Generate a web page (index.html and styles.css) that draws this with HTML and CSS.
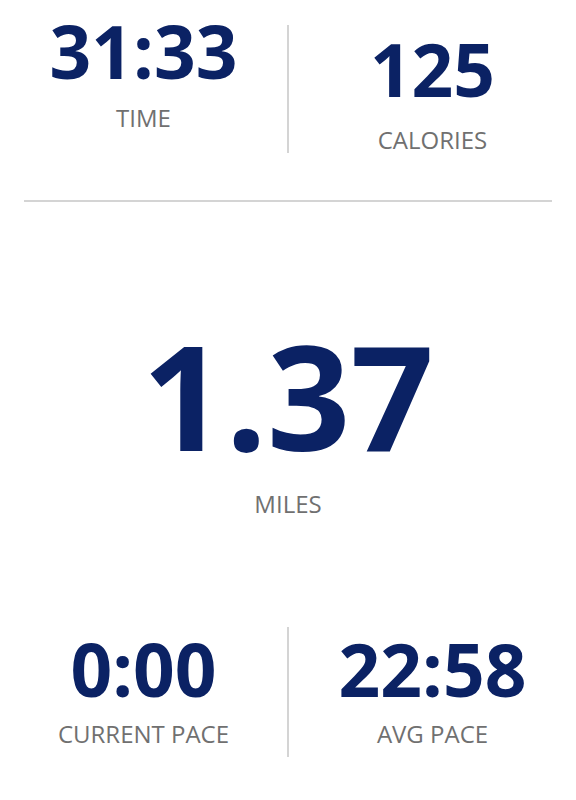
FILE: index.html
```html
<!DOCTYPE html>
<html lang="en">
<head>
    <meta charset="UTF-8">
    <meta name="viewport" content="width=device-width, initial-scale=1.0">
    <title>Workout</title>
    <link rel="stylesheet" href="styles.css">
</head>
<body>
    <div class="stats">
        <div class="row top">
            <div class="cell">
                <div class="value">31:33</div>
                <div class="label">TIME</div>
            </div>
            <div class="cell split">
                <div class="value">125</div>
                <div class="label">CALORIES</div>
            </div>
        </div>
        <div class="rule"></div>
        <div class="main">
            <div class="value big">1.37</div>
            <div class="label">MILES</div>
        </div>
        <div class="row bottom">
            <div class="cell">
                <div class="value">0:00</div>
                <div class="label">CURRENT PACE</div>
            </div>
            <div class="cell split">
                <div class="value">22:58</div>
                <div class="label">AVG PACE</div>
            </div>
        </div>
    </div>
</body>
</html>
```

FILE: styles.css
```css
body,html{
    margin: 0;
    width: 100%;
    height: 100%;
    background: #fff;
}
.stats{
    font-family: "Open Sans", "Noto Sans", sans-serif;
    padding-top: 14px;
}
.row{
    display: flex;
    align-items: flex-start;
}
.cell{
    flex: 1;
    text-align: center;
    box-sizing: border-box;
}
.split{
    border-left: 2px solid #d4d4d4;
}
.value{
    color: #0b2264;
    font-weight: 700;
    font-size: 73px;
    line-height: 1;
}
.label{
    color: #707070;
    font-size: 24px;
    line-height: 1;
}
.top .cell .label{
    margin-top: 19px;
}
.top .split{
    margin-top: 11px;
    height: 128px;
    padding-top: 7px;
}
.top .split .label{
    margin-top: 23px;
}
.rule{
    height: 2px;
    background: #d4d4d4;
    margin: 47px 24px 0;
}
.main{
    text-align: center;
    margin-top: 120px;
}
.big{
    font-size: 146px;
}
.main .label{
    margin-top: 24px;
}
.bottom{
    margin-top: 111px;
}
.bottom .cell{
    height: 130px;
    padding-top: 5px;
}
.bottom .label{
    margin-top: 17px;
}
```
